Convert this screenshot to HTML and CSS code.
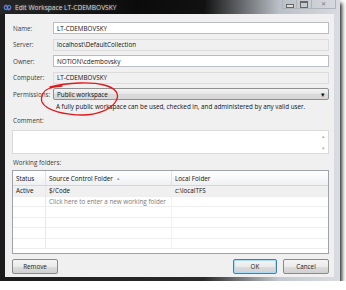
FILE: index.html
```html
<!DOCTYPE html>
<html lang="en">
<head>
    <meta charset="UTF-8">
    <title>Edit Workspace LT-CDEMBOVSKY</title>
    <link rel="stylesheet" href="styles.css">
</head>
<body>
    <div class="window">
        <!-- Glass title bar -->
        <div class="titlebar">
            <svg class="app-icon" width="9" height="7" viewBox="0 0 9 7">
                <path d="M1 3.5 C2.5 0.5 4 0.5 4.5 3.5 C5 6.5 6.5 6.5 8 3.5" fill="none" stroke="#7d6fd8" stroke-width="1.6"/>
                <path d="M1 3.5 C2.5 6.5 4 6.5 4.5 3.5 C5 0.5 6.5 0.5 8 3.5" fill="none" stroke="#3aa0e0" stroke-width="1.2"/>
            </svg>
            <span class="title">Edit Workspace LT-CDEMBOVSKY</span>
            <div class="caption-buttons">
                <span class="cap"><span class="glyph-min"></span></span>
                <span class="cap"><span class="glyph-max"></span></span>
                <span class="cap cap-close">&#x2715;</span>
            </div>
        </div>

        <div class="client">
            <div class="form">
                <div class="label">Name:</div>
                <div class="field">LT-CDEMBOVSKY</div>
                <div class="label">Server:</div>
                <div class="field readonly">localhost\DefaultCollection</div>
                <div class="label">Owner:</div>
                <div class="field">NOTION\cdembovsky</div>
                <div class="label">Computer:</div>
                <div class="field readonly">LT-CDEMBOVSKY</div>
                <div class="label">Permissions:</div>
                <div class="combo">
                    <span>Public workspace</span>
                    <span class="combo-arrow">&#x25BE;</span>
                </div>
            </div>
            <div class="perm-note">A fully public workspace can be used, checked in, and administered by any valid user.</div>

            <div class="section-label">Comment:</div>
            <div class="comment-box">
                <div class="scroll">
                    <span>&#x25B4;</span>
                    <span>&#x25BE;</span>
                </div>
            </div>

            <div class="section-label">Working folders:</div>
            <div class="grid">
                <div class="grid-row grid-head">
                    <div class="cell c-status">Status</div>
                    <div class="cell c-source">Source Control Folder <span class="sort">&#x25B4;</span></div>
                    <div class="cell c-local">Local Folder</div>
                </div>
                <div class="grid-row selected">
                    <div class="cell c-status">Active</div>
                    <div class="cell c-source">$/Code</div>
                    <div class="cell c-local">c:\localTFS</div>
                </div>
                <div class="grid-row">
                    <div class="cell c-status"></div>
                    <div class="cell c-source hint">Click here to enter a new working folder</div>
                    <div class="cell c-local"></div>
                </div>
                <div class="grid-row"><div class="cell c-status"></div><div class="cell c-source"></div><div class="cell c-local"></div></div>
                <div class="grid-row"><div class="cell c-status"></div><div class="cell c-source"></div><div class="cell c-local"></div></div>
                <div class="grid-row"><div class="cell c-status"></div><div class="cell c-source"></div><div class="cell c-local"></div></div>
                <div class="grid-row"><div class="cell c-status"></div><div class="cell c-source"></div><div class="cell c-local"></div></div>
            </div>

            <div class="actions">
                <button class="btn">Remove</button>
                <span class="spacer"></span>
                <button class="btn btn-default">OK</button>
                <button class="btn">Cancel</button>
            </div>
        </div>

        <!-- red marker circle drawn over the permissions box -->
        <svg class="annotation" width="86" height="38" viewBox="0 0 86 38">
            <path d="M12 5 C30 0 55 0 66 3 C78 6 82 12 78 19 C73 28 58 33 45 33 C28 33 8 29 4 20 C2 14 6 8 12 6 C16 5 20 4 24 4"
                  fill="none" stroke="#e0191b" stroke-width="1.3" stroke-linecap="round"/>
        </svg>
    </div>
</body>
</html>
```

FILE: styles.css
```css
/* General styling */
body {
    margin: 0;
    background-color: #fff;
    font-family: "Open Sans", "Noto Sans", sans-serif;
    font-size: 6.3px;
    color: #111;
}
.window {
    position: relative;
    width: 340px;
    height: 281px;
    display: flex;
    flex-direction: column;
    background: linear-gradient(to right, #1c1c1c 0, #2a2a2a 60%, #c4c9cf 82%, #d9dde2 100%);
    box-shadow: 2px 3px 4px rgba(0, 0, 0, 0.85);
}

/* Title bar */
.titlebar {
    height: 14px;
    display: flex;
    align-items: center;
    padding-left: 3px;
    background: linear-gradient(to right, #262626 0, #0b0b0b 40%, #111 60%, #b9bfc6 82%, #d8dce1 100%);
}
.app-icon {
    margin-right: 3px;
}
.title {
    color: #d8d8d8;
    font-size: 6.6px;
    text-shadow: 0 0 3px rgba(255, 255, 255, 0.35);
}
.caption-buttons {
    margin-left: auto;
    align-self: flex-start;
    display: flex;
    margin-right: 4px;
}
.cap {
    height: 9px;
    width: 15px;
    display: flex;
    align-items: center;
    justify-content: center;
    border: 1px solid #aeb4ba;
    border-top: none;
    border-left: none;
    box-sizing: border-box;
    color: #777;
    font-size: 6px;
}
.cap:first-child {
    border-left: 1px solid #aeb4ba;
}
.cap-close {
    width: 24px;
}
.glyph-min {
    width: 6px;
    height: 2px;
    border: 1px solid #666;
    background: #ddd;
    margin-top: 3px;
}
.glyph-max {
    width: 6px;
    height: 4px;
    border: 1px solid #666;
    border-top-width: 2px;
}

/* Dialog body */
.client {
    flex: 1;
    margin: 0 6px 4px 5px;
    padding: 8px 5px 0 7px;
    background-color: #f0f0f0;
    display: flex;
    flex-direction: column;
}
.form {
    display: grid;
    grid-template-columns: 41px 1fr;
    grid-auto-rows: 12px;
    row-gap: 4.5px;
}
.label {
    padding-left: 1px;
    display: flex;
    align-items: center;
    color: #3c3c3c;
}
.field {
    display: flex;
    align-items: center;
    padding-left: 3px;
    background-color: #fff;
    border: 1px solid #b9bcc2;
    box-sizing: border-box;
}
.field.readonly {
    background-color: #f0f0f0;
    border-color: #dcdcdc;
}
.combo {
    display: flex;
    align-items: center;
    padding: 0 3px;
    border: 1px solid #8f9092;
    border-radius: 2px;
    box-sizing: border-box;
    background: linear-gradient(#f3f3f3, #e6e6e6 50%, #dadada 51%, #d7d7d7);
}
.combo-arrow {
    margin-left: auto;
    font-size: 7px;
}
.perm-note {
    margin-top: 3px;
    padding-left: 44px;
    line-height: 8px;
}
.section-label {
    line-height: 8px;
    padding-left: 1px;
    color: #3c3c3c;
}
.perm-note + .section-label {
    margin-top: 6px;
}
.comment-box {
    margin-top: 5px;
    height: 24px;
    background-color: #fff;
    border: 1px solid #dadada;
    box-sizing: border-box;
    display: flex;
    justify-content: flex-end;
}
.scroll {
    width: 9px;
    display: flex;
    flex-direction: column;
    justify-content: space-between;
    align-items: center;
    padding: 2px 0;
    color: #b0b0b0;
    font-size: 5px;
}
.comment-box + .section-label {
    margin-top: 5px;
}

/* Working folders grid */
.grid {
    margin-top: 3px;
    height: 84px;
    box-sizing: border-box;
    border: 1px solid #9ea3aa;
    background-color: #fff;
    overflow: hidden;
}
.grid-row {
    display: flex;
    height: 10.5px;
    border-bottom: 1px solid #eeeeee;
    box-sizing: border-box;
}
.grid-head {
    height: 15px;
    background: linear-gradient(#ffffff, #f7f8f9 50%, #eef0f2);
    border-bottom: 1px solid #d5d5d5;
}
.cell {
    display: flex;
    align-items: center;
    padding-left: 3px;
    box-sizing: border-box;
    white-space: nowrap;
}
.c-status {
    width: 33px;
    border-right: 1px solid #e8e8e8;
}
.c-source {
    width: 126px;
    border-right: 1px solid #f2f2f2;
}
.c-local {
    flex: 1;
}
.grid-head .c-status,
.grid-head .c-source {
    border-right-color: #e2e3e5;
}
.sort {
    margin-left: 4px;
    color: #9aa0a8;
    font-size: 5px;
}
.selected {
    background-color: #f0f0f0;
}
.hint {
    color: #7a7a7a;
}

/* Buttons */
.actions {
    margin-top: 5px;
    display: flex;
    gap: 6px;
}
.spacer {
    flex: 1;
}
.btn {
    width: 46px;
    height: 15px;
    padding: 0;
    font-family: inherit;
    font-size: 6.3px;
    color: #222;
    border: 1px solid #8a8a8a;
    border-radius: 2px;
    background: linear-gradient(#f4f4f4, #ebebeb 50%, #dddddd 51%, #d0d0d0);
}
.btn-default {
    width: 44px;
    border-color: #3c7fb1;
    box-shadow: inset 0 0 0 1px #a9dbf6;
}

/* Annotation */
.annotation {
    position: absolute;
    left: 38px;
    top: 82px;
}
```
